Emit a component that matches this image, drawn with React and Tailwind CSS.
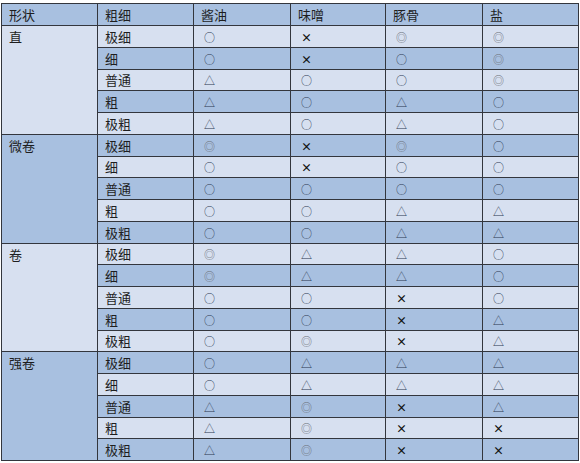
const groups = [
  {
    name: '直',
    rows: [
      ['极细', '○', '×', '◎', '◎'],
      ['细', '○', '×', '○', '◎'],
      ['普通', '△', '○', '○', '◎'],
      ['粗', '△', '○', '△', '○'],
      ['极粗', '△', '○', '△', '○'],
    ],
  },
  {
    name: '微卷',
    rows: [
      ['极细', '◎', '×', '◎', '○'],
      ['细', '○', '×', '○', '○'],
      ['普通', '○', '○', '○', '○'],
      ['粗', '○', '○', '△', '△'],
      ['极粗', '○', '○', '△', '△'],
    ],
  },
  {
    name: '卷',
    rows: [
      ['极细', '◎', '△', '△', '○'],
      ['细', '◎', '△', '△', '○'],
      ['普通', '○', '○', '×', '○'],
      ['粗', '○', '○', '×', '△'],
      ['极粗', '○', '◎', '×', '△'],
    ],
  },
  {
    name: '强卷',
    rows: [
      ['极细', '○', '△', '△', '△'],
      ['细', '○', '△', '△', '△'],
      ['普通', '△', '◎', '×', '△'],
      ['粗', '△', '◎', '×', '×'],
      ['极粗', '△', '◎', '×', '×'],
    ],
  },
];

const LIGHT = 'bg-[#d7e0f0]';
const DARK = 'bg-[#a8c0e0]';

const Mark = ({ v }) => {
  if (v === '×') return <span className="text-[11px] font-bold text-[#111]">×</span>;
  if (v === '◎') return <span className="text-[11px] text-[#6a6f78]">◎</span>;
  return <span className="text-[11px] text-[#2c3850]">{v}</span>;
};

export default function App() {
  let idx = 0;
  return (
    <div className="w-[580px] h-[463px] bg-white pt-[3px] pl-[1px] font-['Noto_Sans_CJK_SC',sans-serif] text-[13px] text-[#1e1e1e]">
      <table className="border-collapse table-fixed w-[577px] border border-[#33363d]">
        <colgroup>
          <col className="w-[96px]" />
          <col className="w-[96px]" />
          <col className="w-[97px]" />
          <col className="w-[95px]" />
          <col className="w-[97px]" />
          <col className="w-[96px]" />
        </colgroup>
        <thead>
          <tr className={`h-[22px] ${DARK}`}>
            {['形状', '粗细', '酱油', '味噌', '豚骨', '盐'].map((h) => (
              <th key={h} className="border border-[#33363d] px-[7px] text-left font-normal leading-none">
                {h}
              </th>
            ))}
          </tr>
        </thead>
        <tbody>
          {groups.map((g, gi) =>
            g.rows.map((r, ri) => {
              const bg = idx++ % 2 === 0 ? LIGHT : DARK;
              return (
                <tr key={`${gi}-${ri}`} className={`h-[21.75px] ${bg}`}>
                  {ri === 0 && (
                    <td
                      rowSpan={5}
                      className={`border border-[#33363d] px-[7px] pt-[3px] align-top leading-[15px] ${gi % 2 === 0 ? LIGHT : DARK}`}
                    >
                      {g.name}
                    </td>
                  )}
                  <td className="border border-[#33363d] px-[7px] leading-none">{r[0]}</td>
                  {r.slice(1).map((v, i) => (
                    <td key={i} className="border border-[#33363d] px-[10px] leading-none">
                      <Mark v={v} />
                    </td>
                  ))}
                </tr>
              );
            })
          )}
        </tbody>
      </table>
    </div>
  );
}
